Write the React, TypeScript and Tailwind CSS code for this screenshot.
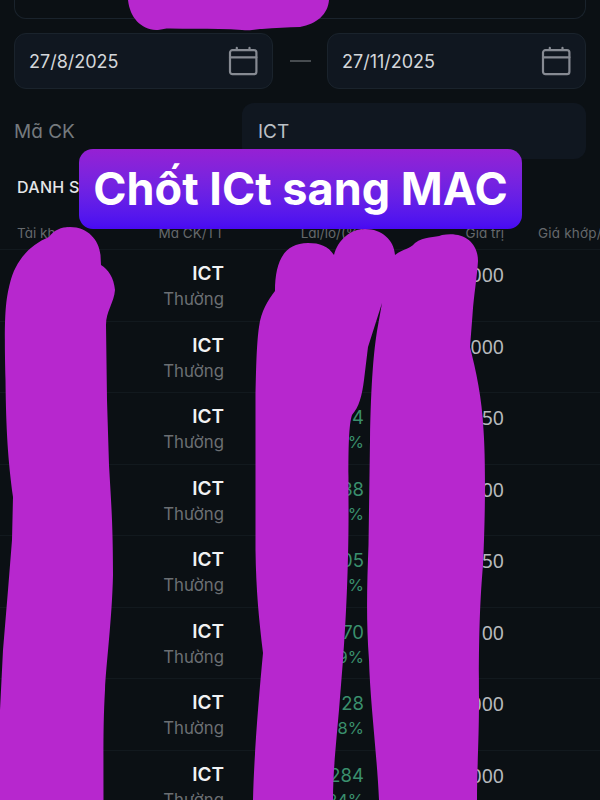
type Row = {
  profit: string;
  percent: string;
  value: string;
};

const rows: Row[] = [
  { profit: "", percent: "", value: "000" },
  { profit: "", percent: "", value: "000" },
  { profit: "4", percent: "%", value: "50" },
  { profit: "38", percent: "%", value: "00" },
  { profit: "05", percent: "%", value: "50" },
  { profit: "70", percent: "9%", value: "00" },
  { profit: "28", percent: "8%", value: "000" },
  { profit: "284", percent: "24%", value: "000" },
];

function CalendarIcon() {
  return (
    <svg
      className="h-[30px] w-[30px] text-[#868a92]"
      viewBox="0 0 30 30"
      fill="none"
      stroke="currentColor"
      strokeWidth="2.2"
      strokeLinecap="round"
    >
      <rect x="2" y="4.2" width="26.4" height="24" rx="2.4" />
      <path d="M2 11.3h26.4M8.800 1.8V4M21.500 1.8V4" />
    </svg>
  );
}

function DateField({ date }: { date: string }) {
  return (
    <div className="flex h-14 w-[259px] items-center justify-between rounded-xl border-[1.5px] border-[#1a232c] bg-[#101720] pr-[14px] pl-[14px]">
      <span className="text-[18px] text-[#d3d6da]">{date}</span>
      <CalendarIcon />
    </div>
  );
}

function Scribbles() {
  return (
    <svg
      className="absolute inset-0 h-[800px] w-[600px]"
      viewBox="0 0 600 800"
      fill="#b727ce"
    >
      <path d="M128 0C130 18 141 29 156 30C162 30 164 28 170 28.500C195 29 220 28 242 30C252 31 256 29 262 29C275 28 288 27 300 27C317 24 328 14 329 0Z" />
      <path d="M70 227C88 227 99 240 100.500 255L101 265C108 269 114 278 115 290C114 303 106 311 106 325L107 400L109 465C111 500 113 525 113 575C112 620 106 665 105 690C103 725 103.500 750 103.500 800H0V710L3 650L8 590L12 540L13 497C8 460 6 430 5.500 380C4 320 5 302 10 283C15 262 29 245 49 237C54 230 61 227 70 227Z" />
      <path d="M308 243C320 243 328 246 334 255C338 240 350 229 365 229C382 229 394 240 395 255C404 248 409 250 415 243C424 236 435 238 442 235C463 231 478 242 478 261C477 278 474 293 472.500 315L470 347C476 371 482 398 483.500 430C486 465 485 525 483 565C480 600 478.500 640 479 700C479 740 477 770 477 800H379C377 755 370 700 369 660C366 620 367 585 368.500 545L370 440C371 380 374 350 377 331L382 303L368 347L364 380C362 396 359 407 352 415C348 427 348.500 460 348.500 500C349 560 346 620 343 660L339 710C335 755 333 775 333 800H253C254 755 259 695 263 653C259 620 256 590 255.500 550L255.500 400C256 365 257 340 259 327C261 311 268 300 275 291C275 263 283 243 308 243Z" />
    </svg>
  );
}

export default function App() {
  return (
    <div className="relative h-[800px] w-[600px] overflow-hidden bg-[#0b1014] font-['Inter','Noto_Sans',sans-serif] [font-feature-settings:'cv11']">
      <div className="flex h-[19px] items-end px-[14px]">
        <div className="h-[19px] w-full rounded-b-xl border-x-[1.5px] border-b-[1.5px] border-[#1a232c]" />
      </div>

      <div className="mt-[14px] flex items-center justify-between px-[14px]">
        <DateField date="27/8/2025" />
        <span className="h-[2px] w-[21px] bg-[#474c50]" />
        <DateField date="27/11/2025" />
      </div>

      <div className="mt-[14px] flex items-center justify-between px-[14px]">
        <span className="pt-[2px] text-[19px] text-[#757a7e]">Mã CK</span>
        <div className="flex h-14 w-[344px] items-center rounded-xl bg-[#101720] pt-[2px] pl-4 text-[19px] text-[#bcc0c5]">
          ICT
        </div>
      </div>

      <h2 className="mt-[16px] h-[25px] pl-[17px] text-[16px] leading-6 font-medium tracking-[0.3px] whitespace-nowrap text-[#e4e6e8]">
        DANH S
      </h2>

      <div className="mt-[20px] grid h-[30px] grid-cols-[17px_67px_140px_140px_140px_110px] border-b border-[#12191e] text-right text-[13.500px] leading-[26px] whitespace-nowrap text-[#65696c]">
        <span />
        <span className="text-left">Tài khoản</span>
        <span>Mã CK/TT</span>
        <span>Lãi/lỗ/(%)</span>
        <span>Giá trị</span>
        <span className="pl-[34px] text-left tracking-[0.2px]">Giá khớp/</span>
      </div>

      {rows.map((row, index) => (
        <div
          className="grid h-[71.55px] grid-cols-[224px_140px_140px_96px] border-b border-[#12191e] pt-[11px] text-right"
          key={index}
        >
          <div>
            <div className="text-[19px] leading-[26px] font-semibold text-[#f1f2f3]">
              ICT
            </div>
            <div className="text-[16.800px] leading-6 text-[#6b6f73]">
              Thường
            </div>
          </div>
          <div className="text-[#3a8f6d]">
            <div className="h-[26px] text-[18.500px] leading-[26px]">
              {row.profit}
            </div>
            <div className="text-[16.500px] leading-6">{row.percent}</div>
          </div>
          <div className="pt-px font-['Noto_Sans',sans-serif] text-[19.500px] leading-[26px] text-[#b7babd]">
            {row.value}
          </div>
        </div>
      ))}

      <Scribbles />

      <div className="absolute top-[149px] left-[79px] flex h-20 w-[443px] items-center justify-center rounded-[14px] bg-linear-to-b from-[#9620d3] to-[#4809f2] text-[45px] font-bold whitespace-nowrap text-white [font-feature-settings:normal]">
        Chốt ICt sang MAC
      </div>
    </div>
  );
}
